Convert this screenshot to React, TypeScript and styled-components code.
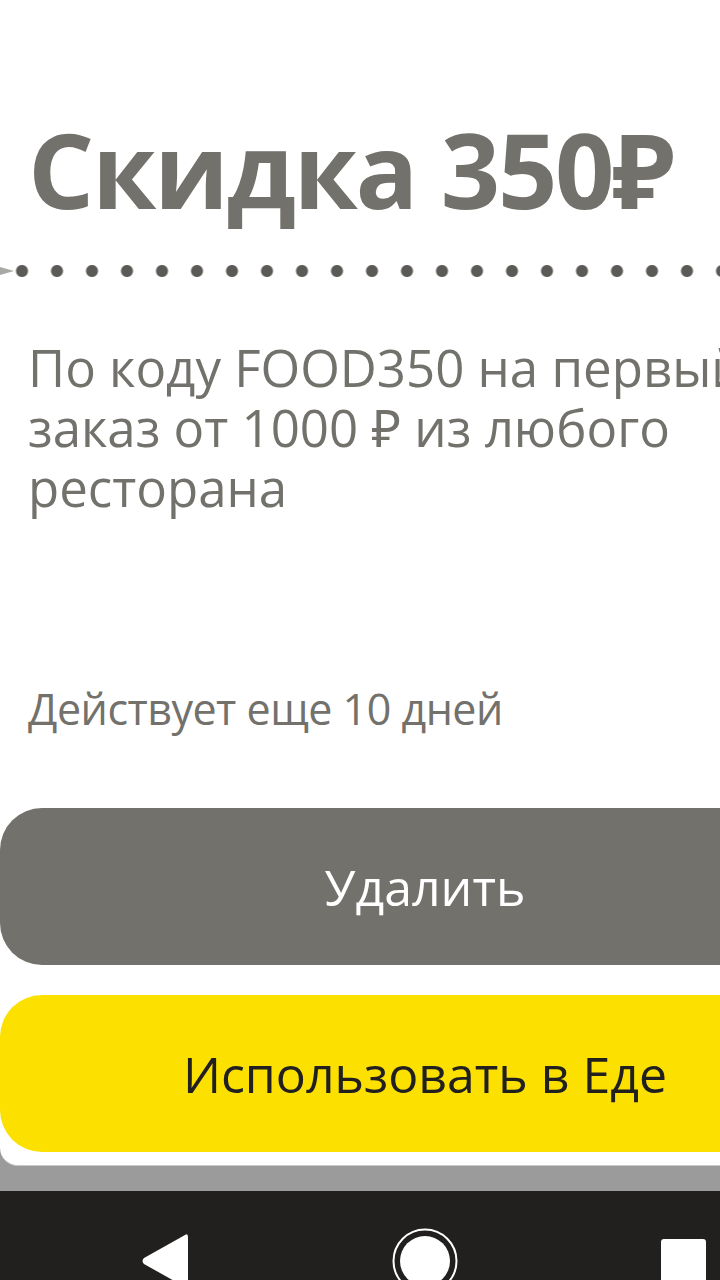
import { createGlobalStyle } from 'styled-components';
import styled from 'styled-components';

const GlobalStyle = createGlobalStyle`
  html, body {
    margin: 0;
    padding: 0;
    background: #ffffff;
    overflow: hidden;
  }
`;

// the nav bar runs past the bottom edge of the window, as on the phone capture
const Screen = styled.div`
  width: 720px;
  height: 1331px;
  overflow: hidden;
  display: flex;
  flex-direction: column;
  background-color: #9b9b9b;
  font-family: 'Open Sans', 'Noto Sans', sans-serif;
`;

const Card = styled.div`
  width: 850px;
  flex: 1;
  min-height: 0;
  display: flex;
  flex-direction: column;
  background-color: #ffffff;
  border-bottom-left-radius: 18px;
  border-bottom: 1px solid #c9c9c9;
  margin-bottom: 25px;
  padding-top: 104px;
  padding-bottom: 13px;
  box-sizing: border-box;
`;

const Title = styled.h1`
  margin: 0 0 0 28px;
  font-size: 104px;
  line-height: 130px;
  font-weight: 700;
  color: #73716c;
  letter-spacing: -2.3px;
  white-space: nowrap;
`;

const Separator = styled.div`
  display: flex;
  align-items: center;
  height: 14px;
  margin-top: 30px;
  background-image: radial-gradient(circle, #5b5a56 5.5px, transparent 6.5px);
  background-size: 35px 14px;
  background-position: 4.5px 0;
  background-repeat: repeat-x;

  &::before {
    content: '';
    width: 0;
    height: 0;
    border-top: 4px solid transparent;
    border-bottom: 4px solid transparent;
    border-left: 14px solid #a9a8a5;
  }
`;

const Description = styled.p`
  margin: 59px 0 0 28px;
  font-size: 51px;
  line-height: 60px;
  font-weight: 400;
  color: #73716c;
  width: 770px;
`;

const Validity = styled.div`
  margin: auto 0 0 28px;
  font-size: 43px;
  line-height: 50px;
  color: #73716c;
  letter-spacing: -0.5px;
`;

const Buttons = styled.div`
  display: flex;
  flex-direction: column;
  gap: 30px;
  margin-top: 74px;
`;

const ActionButton = styled.button<{ $variant: 'muted' | 'primary' }>`
  height: 157px;
  width: 100%;
  border: none;
  border-radius: 42px;
  font-family: inherit;
  font-size: 50px;
  font-weight: 400;
  background-color: ${({ $variant }) => ($variant === 'primary' ? '#fce000' : '#73716c')};
  color: ${({ $variant }) => ($variant === 'primary' ? '#21201f' : '#ffffff')};
  cursor: pointer;
`;

const NavBar = styled.nav`
  flex: 0 0 140px;
  display: flex;
  align-items: center;
  gap: 203px;
  padding-left: 141px;
  background-color: #21201f;
`;

const NavIcon = styled.svg`
  display: block;
  flex: none;
`;

export default function App() {
  return (
    <Screen>
      <GlobalStyle />
      <Card>
        <Title>Скидка 350₽</Title>
        <Separator />
        <Description>
          По коду FOOD350 на первый заказ от 1000 ₽ из любого ресторана
        </Description>
        <Validity>Действует еще 10 дней</Validity>
        <Buttons>
          <ActionButton $variant="muted">Удалить</ActionButton>
          <ActionButton $variant="primary">Использовать в Еде</ActionButton>
        </Buttons>
      </Card>
      <NavBar>
        <NavIcon width="48" height="56" viewBox="0 0 48 56">
          <path d="M44 2 Q47 0 47 4 L47 52 Q47 56 44 54 L3 31 Q0 28 3 25 Z" fill="#ffffff" />
        </NavIcon>
        <NavIcon width="66" height="66" viewBox="0 0 66 66">
          <circle cx="33" cy="33" r="31.5" fill="none" stroke="#ffffff" strokeWidth="2" />
          <circle cx="33" cy="33" r="25" fill="#ffffff" />
        </NavIcon>
        <NavIcon width="45" height="45" viewBox="0 0 45 45">
          <rect x="0" y="0" width="45" height="45" rx="3" fill="#ffffff" />
        </NavIcon>
      </NavBar>
    </Screen>
  );
}
